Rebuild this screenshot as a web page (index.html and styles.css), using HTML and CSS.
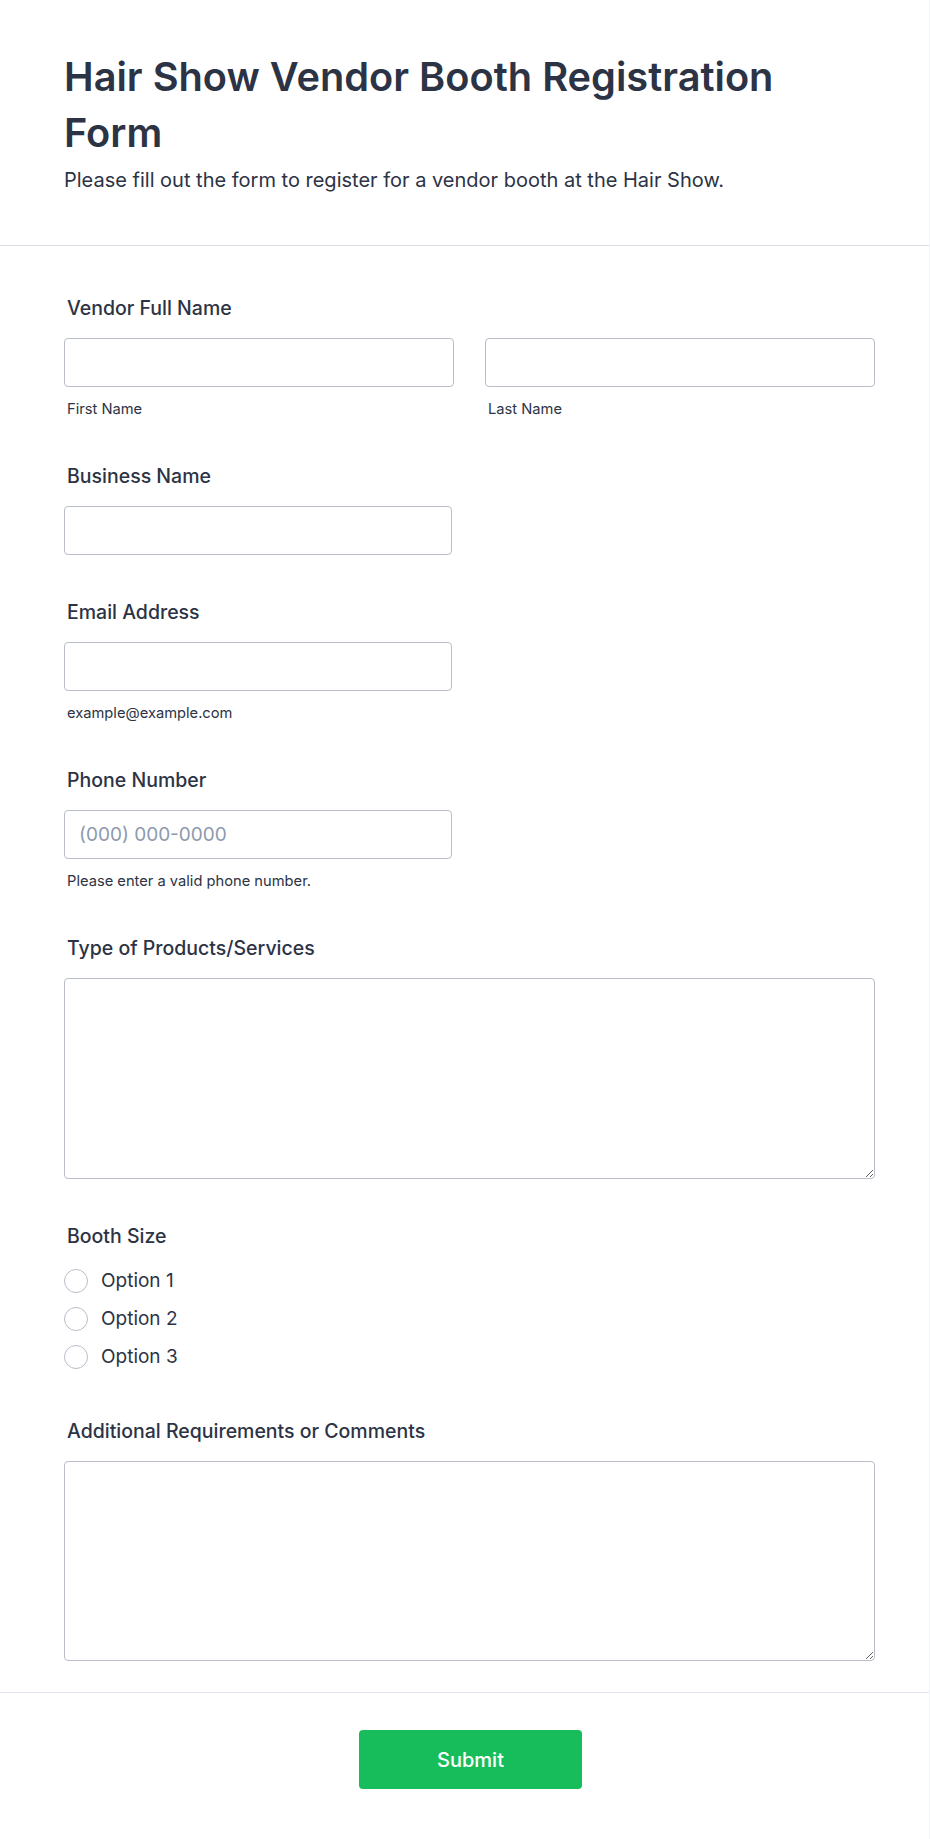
FILE: index.html
```html
<!DOCTYPE html>
<html lang="en">
<head>
<meta charset="utf-8">
<title>Hair Show Vendor Booth Registration Form</title>
<link rel="stylesheet" href="styles.css">
</head>
<body>
<div class="page">
  <header class="form-header">
    <h1 class="form-title">Hair Show Vendor Booth Registration Form</h1>
    <p class="form-subtitle">Please fill out the form to register for a vendor booth at the Hair Show.</p>
  </header>

  <main class="form-body">
    <div class="field">
      <label class="field-label">Vendor Full Name</label>
      <div class="name-row">
        <div class="name-col">
          <input class="text-input full" type="text">
          <span class="sublabel">First Name</span>
        </div>
        <div class="name-col">
          <input class="text-input full" type="text">
          <span class="sublabel">Last Name</span>
        </div>
      </div>
    </div>

    <div class="field">
      <label class="field-label">Business Name</label>
      <input class="text-input half" type="text">
    </div>

    <div class="field">
      <label class="field-label">Email Address</label>
      <input class="text-input half" type="email">
      <span class="sublabel">example@example.com</span>
    </div>

    <div class="field">
      <label class="field-label">Phone Number</label>
      <input class="text-input half" type="tel" placeholder="(000) 000-0000">
      <span class="sublabel">Please enter a valid phone number.</span>
    </div>

    <div class="field">
      <label class="field-label">Type of Products/Services</label>
      <textarea class="text-area"></textarea>
    </div>

    <div class="field field-radios">
      <label class="field-label">Booth Size</label>
      <div class="radio-list">
        <label class="radio-row"><input class="radio" type="radio" name="booth"><span>Option 1</span></label>
        <label class="radio-row"><input class="radio" type="radio" name="booth"><span>Option 2</span></label>
        <label class="radio-row"><input class="radio" type="radio" name="booth"><span>Option 3</span></label>
      </div>
    </div>

    <div class="field">
      <label class="field-label">Additional Requirements or Comments</label>
      <textarea class="text-area"></textarea>
    </div>
  </main>

  <footer class="form-footer">
    <button class="submit-btn" type="submit">Submit</button>
  </footer>
</div>
</body>
</html>
```

FILE: styles.css
```css
html, body {
  margin: 0;
  padding: 0;
}

body {
  background: #f3f3fe;
  font-family: Inter, "Noto Sans", "Liberation Sans", sans-serif;
  color: #2c3345;
}

.page {
  width: 929px;
  background: #ffffff;
}

.form-header {
  padding: 49px 54px 51px 64px;
  border-bottom: 1px solid #dcdee6;
}

.form-title {
  margin: 0;
  font-size: 39.75px;
  line-height: 56px;
  font-weight: 600;
  color: #2c3345;
}

.form-subtitle {
  margin: 6px 0 0;
  font-size: 20px;
  line-height: 27px;
  font-weight: 400;
}

.form-body {
  padding: 50px 54px 31px 64px;
}

.field {
  display: flex;
  flex-direction: column;
  align-items: flex-start;
  margin-bottom: 45px;
}

.field.field-radios {
  margin-bottom: 43px;
}

.field:last-child {
  margin-bottom: 0;
}

.field-label {
  display: block;
  font-size: 19.5px;
  line-height: 24px;
  font-weight: 500;
  padding-left: 3px;
  margin-bottom: 18px;
}

.name-row {
  display: grid;
  grid-template-columns: 390px 390px;
  column-gap: 31px;
  width: 100%;
}

.name-col {
  display: flex;
  flex-direction: column;
}

.text-input {
  box-sizing: border-box;
  height: 49px;
  border: 1px solid #b8bdc9;
  border-radius: 4px;
  background: #fff;
  padding: 0 14px;
  font-family: inherit;
  font-size: 19px;
  color: #2c3345;
  margin: 0;
}

.text-input.full {
  width: 390px;
}

.text-input.half {
  width: 388px;
}

.text-input::placeholder {
  color: #8d99ae;
  opacity: 1;
}

.sublabel {
  display: block;
  margin-top: 12px;
  padding-left: 3px;
  font-size: 14.7px;
  line-height: 20px;
  color: #2c3345;
}

.text-area {
  box-sizing: border-box;
  width: 811px;
  height: 201px;
  border: 1px solid #b8bdc9;
  border-radius: 4px;
  margin: 0;
  padding: 10px 14px;
  font-family: inherit;
  font-size: 16px;
  resize: vertical;
  display: block;
}

.field:last-child .text-area {
  height: 200px;
}

.radio-list {
  display: flex;
  flex-direction: column;
  margin-top: -4px;
}

.radio-row {
  display: flex;
  align-items: center;
  height: 38px;
  gap: 13px;
  font-size: 19px;
  line-height: 24px;
}

.radio {
  appearance: none;
  -webkit-appearance: none;
  box-sizing: border-box;
  width: 24px;
  height: 24px;
  margin: 0;
  border: 1.5px solid #b8bdc9;
  border-radius: 50%;
  background: #fff;
}

.form-footer {
  border-top: 1px solid #e3e5ee;
  padding: 37px 54px 50px 66px;
  display: flex;
  justify-content: center;
}

.submit-btn {
  width: 223px;
  height: 59px;
  border: none;
  border-radius: 4px;
  background: #18bd5b;
  color: #ffffff;
  font-family: inherit;
  font-size: 20px;
  font-weight: 500;
  cursor: pointer;
}
```
